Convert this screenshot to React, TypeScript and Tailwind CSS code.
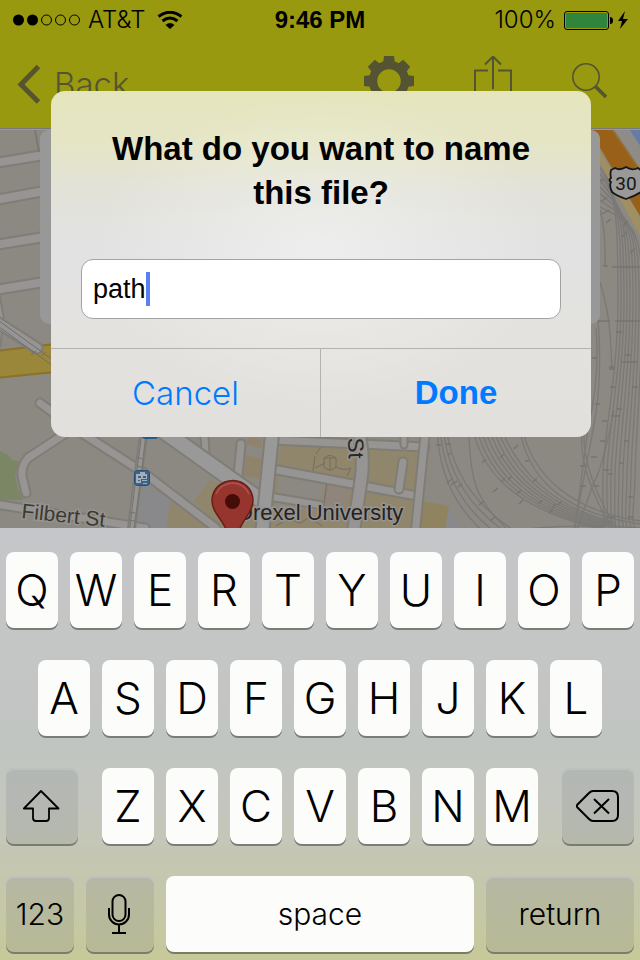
import type { ReactNode } from "react";

const railsWest = Array.from({ length: 4 }, (_, i) => i);
const railsMid = Array.from({ length: 8 }, (_, i) => i);
const railsEast = Array.from({ length: 9 }, (_, i) => i);
const gearTeeth = [0, 45, 90, 135, 180, 225, 270, 315];

function Road({ d, w = 8, tone = "#969593" }: { d: string; w?: number; tone?: string }) {
  return (
    <g fill="none" strokeLinecap="round" strokeLinejoin="round">
      <path d={d} stroke="#807d76" strokeWidth={w + 4} />
      <path d={d} stroke={tone} strokeWidth={w} />
    </g>
  );
}

function CityMap() {
  return (
    <svg
      className="absolute inset-0 h-full w-full"
      viewBox="0 129 640 399"
      preserveAspectRatio="xMidYMax slice"
      role="img"
      aria-label="Map around Drexel University"
    >
      <rect y="100" width="640" height="440" fill="#8c8882" />
      <path d="M0 451l8 4 4 5 7 1-4 14 3 14 5 11H0z" fill="#7b8664" />
      <path d="M142 482l28 17-4 32h-30z" fill="#89898b" />
      <path d="M170 502l38 24v8h-42zM210 480l48 22-2 26h-34l-28-27z" fill="#8f866c" />
      <path d="M248 436l14 4-1 8-15-4zM246 455l16 4-3 20-15-3z" fill="#90836b" />
      <path d="M281 442l144 6-12 86H268z" fill="#8f866c" />
      <path d="M278 475l42 7 27 5-5 26-66-6z" fill="#8c8882" />
      <path d="M324 483l26 4-6 30-24-5z" fill="#90857a" />
      <path d="M421 501l28 5-4 26h-26z" fill="#8f845f" />
      <path d="M449 506c4 10 9 18 18 26h-22z" fill="#89898b" />
      <g fill="none" stroke="#776c5f" strokeWidth="1">
        <path d="M316 454l5-7M315 456l-2 15M324 458h12M330 458v13M324 458q6-5 12 0v9q-6 6-12 0zM325 463l-10 5M336 467q8 4 15 1l-4 8M327 483l-3 20M276 526l12-7 12 4 10-6 12 9" />
      </g>

      <Road d="M-5 163L50 154" />
      <Road d="M-5 200L50 190" />
      <Road d="M-5 245L50 236" />
      <Road d="M-5 290L50 281" />
      <path d="M35 130l4 22" fill="none" stroke="#7c7972" strokeWidth="2" />
      <Road d="M-4 295l4 22-3 28" w={5} />
      <path d="M-5 351l60-7v28l-60 7z" fill="#9a8739" />
      <path d="M-5 351l60-7M-5 378l60-6" fill="none" stroke="#8b7129" strokeWidth="2" />
      <Road d="M-5 321L37 348" w={9} />
      <path d="M-5 318L60 365M-5 324L60 371M31 355l5-4M42 356l4-4" fill="none" stroke="#6f6e70" strokeWidth="1" />
      <Road d="M40 403l30 22" w={7} />
      <Road d="M75 427L28 458q-7 8-6 18l4 17" w={7} />
      <Road d="M-5 504l150 24" w={7} />
      <Road d="M74 428l70 45 72 55" w={7} />
      <Road d="M204 427l2 35" w={6} />
      <Road d="M241 444l-4 42" w={7} />
      <Road d="M145 425l-8 58-6 50" w={5} />
      <path d="M143 425l-8 60-6 50M147 425l-7 60-7 50M136 457l7 2M137 466l7 2M129 512l6 1M129 520l6 1" fill="none" stroke="#777572" strokeWidth="1" />
      <Road d="M272 440l153 7" w={7} />
      <Road d="M404 425v20" w={5} />
      <Road d="M272 469l145 27" w={7} />
      <Road d="M272 497l48 8" w={6} />
      <Road d="M403 462l-4 27" w={7} />
      <Road d="M426 425l-11 110" w={7} />
      <Road d="M357 425q8 30 4 55l-8 55" w={11} />
      <Road d="M155 425l104 74" w={14} tone="#999" />
      <Road d="M273 425l-11 110" w={12} tone="#999" />

      <g fill="none" stroke="#7a7977" strokeWidth="1.3">
        {railsWest.map((i) => (
          <path key={i} d={`M${437 + i * 3} 425q${1 + i * 2} 68 ${48 + i * 8} 108`} />
        ))}
        {railsMid.map((i) => (
          <path key={i} d={`M${472 + i * 4} 425c${8 + i} 42 ${36 + i * 2} 82 ${128 - i * 2} ${104 - i}`} />
        ))}
        <path d="M519 425c8 55 45 88 121 99M522 425c8 50 50 86 118 96M468 425c4 45 0 68 38 103M520 530q50-7 120-2" />
        {railsEast.map((i) => (
          <path
            key={i}
            d={`M598 ${150 + i * 7}C${618 + i * 2} ${200 + i * 3} ${618 + i * 3} 225 ${618 + i * 3} 300S${604 + i * 4} 430 ${603 + i * 4} 475S${606 + i * 3} 510 ${604 + i * 4} 535`}
          />
        ))}
        <path d="M600 210q6 20 5 56M600 282c12 40 10 60 12 86M598 320q5 60-5 110l-20 105M596 328q4 50-8 100l-14 107M582 432q-4 40 32 100M584 432q-2 40 34 100M614 410q-12 60-20 72l-18 50" />
      </g>
      <g stroke="#757371" strokeWidth="1.3">
        <path d="M600 180h5M602 201l5-4M602 214l8-4M606 223l5-4M623 226l5-5M622 237l5-5M630 253l5-5M603 266h5M612 267h28M595 321h15M615 321h25M592 358h5M616 332h6M625 355h6M609 367h6M609 369h6M621 362h10M631 362h6M610 387h6M632 387h6M595 404h5M617 409h5M602 421h5M611 416h9M624 441h5M600 441h5M580 466h5M608 474h5M594 486h5M619 463h5M628 497h5M604 470h5M580 486h6M591 457h6M609 517h6M628 517h6" />
        <path d="M436 445h5M446 444h5M447 454h4M447 483l5-4M451 485l6-4M458 487l4-3M482 463l4-4M500 458l4-4M493 492l5-4M514 449l4-4M501 482l4-4M508 480l4-4M517 494l4-4M525 461h4M533 482l4-4M538 504l4-4M552 508l4-4M558 505l4-4M479 505l5-4M490 521l5-4M519 504l4-4M549 513l4-4" />
      </g>

      <path d="M588 129h24l32 46v48l-46-79z" fill="#996017" />
      <path d="M598 148l46 75v20l-46-83z" fill="#a08f62" />
      <path d="M613 129h18l14 21v27z" fill="#8f8b86" />
      <path d="M629 129h16v24z" fill="#657da6" />
      <path d="M612 129l34 50" stroke="#907133" strokeWidth="2" />

      <rect x="30" y="129" width="12" height="1" fill="#999" />
      <rect x="40" y="130" width="560" height="194" rx="9" fill="#999899" />
      <path d="M0 129.500h640" stroke="#999a9e" />

      <path
        d="M615 168q5 3 11-1 6 4 12 1l5 4q-3 4-1 8 3 6-1 12-6 4-15 7-9-3-14-7-3-6-1-10-3-2 0-4-1-4 0-8z"
        fill="#999"
        stroke="#171717"
        strokeWidth="1.800"
        strokeLinejoin="round"
      />
      <text x="626" y="190" textAnchor="middle" fontSize="19" fill="#161616" fontFamily="Roboto, sans-serif">
        30
      </text>

      <rect x="142" y="423" width="16" height="16" rx="3" fill="#27598c" />
      <rect x="134.500" y="470.500" width="15" height="15" rx="3" fill="#376491" stroke="#264e79" />
      <path
        d="M140 472h5v2h2v5h-6v4h-5v-9h4zM138 476v2h3v-2zM143 476v2h3v-2zM142 480h5v1h-5zM138 480v1h2v-1zM143 483h4v1h-4z"
        fill="#a5adb5"
        fillRule="evenodd"
      />

      <g fontFamily="'Liberation Sans', Arial, sans-serif" stroke="#959492" strokeWidth="3" paintOrder="stroke">
        <text x="21" y="518" fontSize="21" fill="#3c3a30" transform="rotate(6 21 518)">
          Filbert St
        </text>
        <text x="348" y="438" fontSize="22" fill="#292823" transform="rotate(88 348 438)">
          St
        </text>
        <text x="237" y="520" fontSize="22" fill="#25221f">
          Drexel University
        </text>
      </g>

      <path d="M233 480.500c-12 0-21 9-21 20 0 13 12 19 16 34h10c3-15 15-21 15-34 0-11-9-20-20-20z" fill="#96342e" stroke="#6b1d18" strokeWidth="1.500" />
      <path d="M216 494q4-10 17-11 12 1 16 11" fill="none" stroke="#aa5650" strokeWidth="1.500" />
      <circle cx="232.500" cy="501.500" r="7.500" fill="#450d08" />
    </svg>
  );
}

function StatusBar() {
  return (
    <div className="grid h-10 grid-cols-[1fr_auto_1fr] items-center px-3 text-[24px] leading-6 text-black">
      <div className="flex items-center gap-2">
        <svg className="h-3 w-[68px]" viewBox="0 0 68 12" role="img" aria-label="Signal: 2 of 5">
          <circle cx="6.500" cy="6" r="5.500" />
          <circle cx="20.500" cy="6" r="5.500" />
          <g fill="none" stroke="#000" strokeWidth="1">
            <circle cx="34.500" cy="6" r="5" />
            <circle cx="48.500" cy="6" r="5" />
            <circle cx="62.500" cy="6" r="5" />
          </g>
        </svg>
        <span className="font-['Inter','Liberation_Sans',sans-serif] font-light">AT&amp;T</span>
        <svg className="ml-1 h-[18px] w-[26px]" viewBox="0 0 26 18" role="img" aria-label="Wi-Fi">
          <path d="M1.500 5.500Q13-3 24.500 5.500M5.500 10Q13 4 20.500 10" fill="none" stroke="#000" strokeWidth="3" />
          <path d="M8.500 14q4.500-4 9 0L13 18z" />
        </svg>
      </div>
      <span className="font-['Liberation_Sans',Arial,sans-serif] font-bold">9:46 PM</span>
      <div className="flex items-center justify-end gap-2">
        <span className="font-['Inter','Liberation_Sans',sans-serif] font-light">100%</span>
        <svg className="h-5 w-16" viewBox="0 0 64 20" role="img" aria-label="Battery full, charging">
          <rect x=".5" y="1.500" width="44" height="18" rx="2.500" fill="none" stroke="#000" />
          <rect x="2" y="3" width="41" height="15" rx="1" fill="#2f853b" />
          <path d="M46 7q3 0 3 3.500T46 14z" />
          <path d="M61 1l-7 10h4l-2 8 8-10h-5z" />
        </svg>
      </div>
    </div>
  );
}

function NavBar() {
  return (
    <nav className="flex h-[88px] items-center justify-between pr-8 pl-4 text-[#545433]">
      <button type="button" className="flex items-center gap-3.5 leading-10">
        <svg className="h-10 w-6" viewBox="0 0 24 40" aria-hidden="true">
          <path d="M22.500 2.500L5 20.500l17.500 17.500" fill="none" stroke="currentColor" strokeWidth="5" />
        </svg>
        <span className="font-['Inter','Liberation_Sans',sans-serif] text-[33px] font-light">Back</span>
      </button>
      <div className="flex items-center gap-[60px] pb-1.5">
        <button type="button" aria-label="Settings">
          <svg className="size-[50px]" viewBox="0 0 50 50">
            <circle cx="25" cy="25" r="16" fill="none" stroke="currentColor" strokeWidth="8.500" />
            {gearTeeth.map((angle) => (
              <path key={angle} d="M20 0h10l1 8H19z" fill="currentColor" transform={`rotate(${angle} 25 25)`} />
            ))}
          </svg>
        </button>
        <button type="button" aria-label="Share">
          <svg className="h-[50px] w-[38px]" viewBox="0 0 38 50" fill="none" stroke="currentColor" strokeWidth="2">
            <path d="M14 14.500H1V49h36V14.500H24M19 33V1M11 8.500L19 .500l8 8" />
          </svg>
        </button>
        <button type="button" aria-label="Search">
          <svg className="size-9" viewBox="0 0 36 36" fill="none" stroke="currentColor">
            <circle cx="14" cy="14" r="13.200" strokeWidth="1.600" />
            <path d="M23.500 23.500L34 34" strokeWidth="3.600" />
          </svg>
        </button>
      </div>
    </nav>
  );
}

function NameDialog() {
  return (
    <form
      role="dialog"
      aria-labelledby="dialog-title"
      onSubmit={(e) => e.preventDefault()}
      className="absolute inset-x-[50px] top-[91px] mr-[-1px] ml-px overflow-hidden rounded-[14px] bg-[radial-gradient(ellipse_at_50%_46%,#ffffff66,#ffffff00_60%),linear-gradient(#e5e5bd_0%,#e5e5c6_15%,#e2e2d9_29%,#e2e2e3_45%,#e3e2df_68%,#e1e0dc_100%)] font-['Liberation_Sans',Arial,sans-serif]"
    >
      <div className="px-[30px] pt-9 pb-[29px]">
        <h1 id="dialog-title" className="px-5 text-center text-[33px] leading-11 font-bold text-black">
          <label htmlFor="file-name">What do you want to name this file?</label>
        </h1>
        <div className="mt-11 flex h-[60px] items-center rounded-[12px] border border-[#a3a3a3] bg-white px-[11px]">
          <input
            id="file-name"
            type="text"
            defaultValue="path"
            className="field-sizing-content bg-transparent text-[27px] leading-8 text-black caret-transparent outline-none"
          />
          <span className="h-[34px] w-1 bg-[#5b7ff0]" aria-hidden="true" />
        </div>
      </div>
      <div className="grid grid-cols-2 divide-x divide-[#b2b2b0] border-t border-[#b2b2b0] text-[33px] leading-10 text-[#007aff]">
        <button type="button" className="h-[88px] font-['Inter','Liberation_Sans',sans-serif] font-light">
          Cancel
        </button>
        <button type="submit" className="h-[88px] font-bold">
          Done
        </button>
      </div>
    </form>
  );
}

function LetterKey({ letter }: { letter: string }) {
  return (
    <button
      type="button"
      className="h-[76px] min-w-0 flex-1 rounded-[8px] bg-[#fcfcfb] text-[44px] shadow-[0_2px_0_#7b7c78]"
    >
      {letter}
    </button>
  );
}

function ControlKey({ label, width, children }: { label?: string; width: string; children: ReactNode }) {
  return (
    <button
      type="button"
      aria-label={label}
      className={`${width} flex h-[76px] shrink-0 items-center justify-center rounded-[8px] bg-[#686a7428] text-[30px] shadow-[0_2px_0_#7b7c70,inset_0_2px_0_#bfc1c0]`}
    >
      {children}
    </button>
  );
}

function Keyboard() {
  return (
    <div className="flex flex-col gap-8 bg-[linear-gradient(#c4c6c9_0%,#c4c6c5_30%,#c1c5c2_50%,#c4c6be_65%,#c5c7af_80%,#c6c999_100%)] pt-6 pb-2 font-['Inter','Liberation_Sans',sans-serif] leading-none font-light text-black">
      <div className="flex gap-3 px-1.5">
        {[..."QWERTYUIOP"].map((k) => (
          <LetterKey key={k} letter={k} />
        ))}
      </div>
      <div className="flex gap-3 px-[38px]">
        {[..."ASDFGHJKL"].map((k) => (
          <LetterKey key={k} letter={k} />
        ))}
      </div>
      <div className="flex gap-6 px-1.5">
        <ControlKey label="Shift" width="w-[72px]">
          <svg className="h-8 w-[38px]" viewBox="0 0 38 32" fill="none" stroke="#000" strokeWidth="1.800" strokeLinejoin="round">
            <path d="M18 1L.9 18.500H10V28q0 3 3 3h10q3 0 3-3v-9.500h9.500z" />
          </svg>
        </ControlKey>
        <div className="flex flex-1 gap-3">
          {[..."ZXCVBNM"].map((k) => (
            <LetterKey key={k} letter={k} />
          ))}
        </div>
        <ControlKey label="Delete" width="w-[72px]">
          <svg className="h-8 w-11" viewBox="0 0 44 32" fill="none" stroke="#000" strokeWidth="2">
            <path d="M17 1h19q6 0 6 6v18q0 6-6 6H17q-2 0-4-2L1.500 17.500q-1.500-1.500 0-3L13 3q2-2 4-2zM18 9l15 14.500M33 9L18 23.500" />
          </svg>
        </ControlKey>
      </div>
      <div className="flex gap-3 px-1.5">
        <ControlKey width="w-[68px]">123</ControlKey>
        <ControlKey label="Dictation" width="w-[68px]">
          <svg className="h-10 w-6" viewBox="0 0 24 40" fill="none" stroke="#000" strokeWidth="2">
            <rect x="4.500" y="1" width="13" height="26" rx="6.500" />
            <path d="M1 14v6.500a10 10 0 0 0 20 0V14M11 31v8M4 39h14" />
          </svg>
        </ControlKey>
        <button
          type="button"
          className="h-[76px] flex-1 rounded-[8px] bg-[#fcfcfa] text-[30px] shadow-[0_2px_0_#7b7d62]"
        >
          space
        </button>
        <ControlKey width="w-[148px]">return</ControlKey>
      </div>
    </div>
  );
}

export default function App() {
  return (
    <main className="relative flex min-h-screen flex-col overflow-hidden bg-[#8c8882]">
      <header className="border-b border-[#77777c] bg-[#98990f]">
        <StatusBar />
        <NavBar />
      </header>
      <section className="relative min-h-[399px] flex-1">
        <CityMap />
      </section>
      <NameDialog />
      <Keyboard />
    </main>
  );
}
